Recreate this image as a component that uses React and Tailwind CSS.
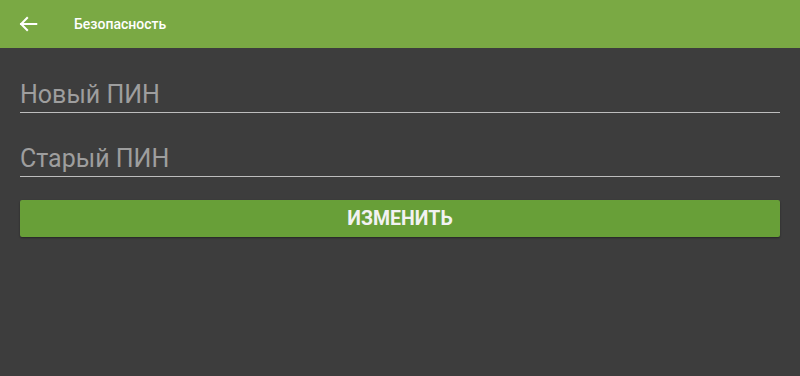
import React from 'react';

export default function App() {
  return (
    <div className="w-[800px] h-[376px] bg-[#3d3d3d] flex flex-col" style={{ fontFamily: 'Roboto, "Noto Sans", sans-serif' }}>
      {/* шапка */}
      <div className="h-[48px] bg-[#7aa944] flex items-center shrink-0">
        <div className="w-[74px] pl-[17px] flex items-center">
          <svg width="22" height="22" viewBox="0 0 24 24" fill="none" stroke="white" strokeWidth="2.2" strokeLinecap="square">
            <path d="M21 12H4.5" />
            <path d="M11 5.5l-6.5 6.5 6.5 6.5" />
          </svg>
        </div>
        <span className="text-white text-[14px] font-medium">Безопасность</span>
      </div>

      {/* форма */}
      <div className="px-[20px] pt-[16px] flex flex-col">
        <div className="h-[49px] border-b border-[#bdbdbd] flex items-end pb-[2px]">
          <span className="text-[25px] leading-[30px] text-[#9e9e9e]">Новый ПИН</span>
        </div>
        <div className="h-[64px] border-b border-[#bdbdbd] flex items-end pb-[2px]">
          <span className="text-[25px] leading-[30px] text-[#9e9e9e]">Старый ПИН</span>
        </div>
        <button className="mt-[23px] h-[37px] w-full rounded-[2px] bg-[#689f38] shadow-[0_1px_2px_rgba(0,0,0,0.4)] text-[#f2f2f2] text-[19.5px] font-bold">
          ИЗМЕНИТЬ
        </button>
      </div>
    </div>
  );
}
